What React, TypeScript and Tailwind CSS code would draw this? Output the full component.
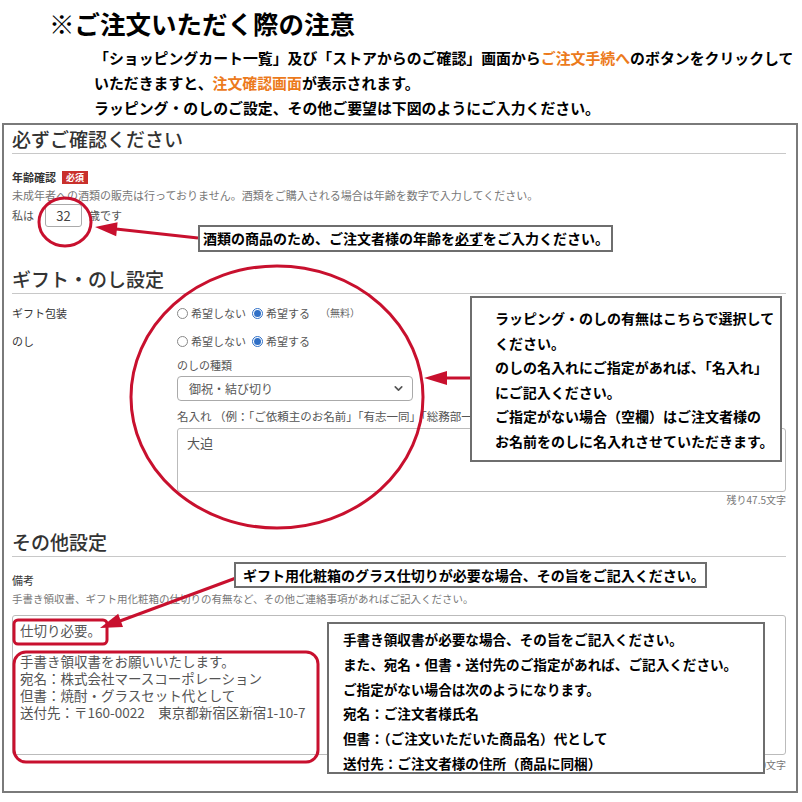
import React from 'react';
import { ChevronDown } from 'lucide-react';

const jp = { fontFamily: '"Noto Sans CJK JP", "Noto Sans", sans-serif' };

function Radio({ checked, label }: { checked?: boolean; label: string }) {
  return (
    <span className="inline-flex items-center gap-[3px] mr-[6px]">
      <span
        className={
          checked
            ? 'w-[11px] h-[11px] rounded-full border border-[#2f6fc6] flex items-center justify-center'
            : 'w-[11px] h-[11px] rounded-full border border-[#888]'
        }
      >
        {checked && <span className="w-[7px] h-[7px] rounded-full bg-[#2f6fc6]" />}
      </span>
      <span>{label}</span>
    </span>
  );
}

function SectionTitle({ children, className }: { children: React.ReactNode; className?: string }) {
  return (
    <h2
      className={
        'h-[29px] leading-[28px] text-[19px] font-medium text-[#333] border-b border-[#c8c8c8] mr-[6px] ' +
        (className ?? '')
      }
    >
      {children}
    </h2>
  );
}

function Callout({ className, children }: { className: string; children: React.ReactNode }) {
  return (
    <div className={'absolute bg-white border-2 border-[#6e6e6e] font-bold text-black ' + className}>
      {children}
    </div>
  );
}

export default function App() {
  return (
    <div className="relative w-[802px] h-[802px] bg-white overflow-hidden" style={jp}>
      {/* heading notes */}
      <div className="pt-[7px]">
        <h1 className="pl-[49px] text-[25.5px] leading-[32px] font-bold text-black">※ご注文いただく際の注意</h1>
        <div className="pl-[94px] mt-[6px] text-[14.9px] leading-[25px] font-bold text-black whitespace-nowrap">
          <p>
            「ショッピングカート一覧」及び「ストアからのご確認」画面から
            <span className="text-[#ec7a1c]">ご注文手続へ</span>のボタンをクリックして
          </p>
          <p>
            いただきますと、<span className="text-[#ec7a1c]">注文確認画面</span>が表示されます。
          </p>
          <p>ラッピング・のしのご設定、その他ご要望は下図のようにご入力ください。</p>
        </div>
      </div>

      {/* order form */}
      <div className="ml-[2px] mt-[3px] w-[796px] h-[670px] border-2 border-[#7a7a7a] pl-[8px] pr-[4px] text-[#555]">
        <SectionTitle>必ずご確認ください</SectionTitle>

        <div className="mt-[16px] flex items-center gap-[6px] h-[14px]">
          <span className="text-[11px] font-bold text-[#333]">年齢確認</span>
          <span className="bg-[#c9302c] text-white text-[9px] font-bold leading-[13px] px-[4px]">必須</span>
        </div>
        <p className="mt-[3px] text-[11px] leading-[16px] text-[#777]">
          未成年者への酒類の販売は行っておりません。酒類をご購入される場合は年齢を数字で入力してください。
        </p>
        <div className="mt-[1px] flex items-center h-[23px] text-[11px]">
          <span>私は</span>
          <span className="ml-[11px] w-[37px] h-[23px] border border-[#aaa] rounded-[3px] flex items-center justify-center text-[13px] text-[#444]">
            32
          </span>
          <span className="ml-[7px]">歳です</span>
        </div>

        <SectionTitle className="mt-[38px]">ギフト・のし設定</SectionTitle>

        <div className="flex text-[11px] leading-[16px]">
          <div className="w-[165px] shrink-0">
            <p className="mt-[11px] text-[#333]">ギフト包装</p>
            <p className="mt-[12px] text-[#333]">のし</p>
          </div>
          <div className="flex-1 pr-[6px]">
            <div className="mt-[11px] flex items-center">
              <Radio label="希望しない" />
              <Radio checked label="希望する" />
              <span className="ml-[4px] text-[10px] text-[#666]">（無料）</span>
            </div>
            <div className="mt-[12px] flex items-center">
              <Radio label="希望しない" />
              <Radio checked label="希望する" />
            </div>
            <p className="mt-[8px]">のしの種類</p>
            <div className="mt-[3px] w-[236px] h-[25px] border border-[#aaa] rounded-[4px] flex items-center justify-between pl-[11px] pr-[7px] text-[12px] text-[#555]">
              <span>御祝・結び切り</span>
              <ChevronDown size={13} strokeWidth={3} className="text-[#555]" />
            </div>
            <p className="mt-[7px] whitespace-nowrap text-[11.5px]">
              名入れ （例：「ご依頼主のお名前」「有志一同」「総務部一同」など）
            </p>
            <div className="mt-[4px] h-[64px] border border-[#bbb] rounded-[3px] px-[9px] py-[5px] text-[13px] leading-[18px] text-[#555]">
              大迫
            </div>
            <p className="mt-[1px] text-right text-[10px] leading-[14px] text-[#777]">残り47.5文字</p>
          </div>
        </div>

        <SectionTitle className="mt-[21px]">その他設定</SectionTitle>

        <p className="mt-[15px] text-[11px] leading-[16px] text-[#333]">備考</p>
        <p className="mt-[3px] text-[10.5px] leading-[16px] text-[#777]">
          手書き領収書、ギフト用化粧箱の仕切りの有無など、その他ご連絡事項があればご記入ください。
        </p>
        <div className="mt-[8px] mr-[6px] h-[140px] border border-[#bbb] rounded-[3px] px-[7px] pt-[6px] text-[13.5px] leading-[17px] text-[#555]">
          <p>仕切り必要。</p>
          <div className="mt-[14px]">
            <p>手書き領収書をお願いいたします。</p>
            <p>宛名：株式会社マースコーポレーション</p>
            <p>但書：焼酎・グラスセット代として</p>
            <p className="whitespace-pre">送付先：〒160-0022　東京都新宿区新宿1-10-7</p>
          </div>
        </div>
        <p className="mt-[3px] mr-[6px] text-right text-[10px] leading-[14px] text-[#777]">残り200文字</p>
      </div>

      {/* red markings */}
      <svg className="absolute inset-0 pointer-events-none" width={802} height={802} viewBox="0 0 802 802">
        <g fill="none" stroke="#c8102e" strokeWidth={3}>
          <ellipse cx={65} cy={222} rx={26} ry={24} />
          <ellipse cx={277} cy={397} rx={146} ry={131} />
          <rect x={14} y={620} width={93} height={24} rx={4} />
          <rect x={14} y={652} width={304} height={110} rx={12} />
          <line x1={198} y1={238} x2={116} y2={229} />
          <line x1={470} y1={378} x2={446} y2={378} />
          <line x1={236} y1={578} x2={120} y2={621} />
        </g>
        <g fill="#c8102e">
          <polygon points="95,227 117.6,222.3 116.2,236.3" />
          <polygon points="424,378 447,371 447,385" />
          <polygon points="100,628 123,627 118.2,613.8" />
        </g>
      </svg>

      <Callout className="left-[198px] top-[225px] w-[415px] h-[27px] pl-[3px] text-[14px] leading-[23px]">
        酒類の商品のため、ご注文者様の年齢を<span className="underline">必ず</span>をご入力ください。
      </Callout>

      <Callout className="left-[470px] top-[296px] w-[312px] h-[166px] pl-[23px] pt-[8px] text-[14px] leading-[24.6px]">
        <p>ラッピング・のしの有無はこちらで選択して</p>
        <p>ください。</p>
        <p>のしの名入れにご指定があれば、「名入れ」</p>
        <p>にご記入ください。</p>
        <p>ご指定がない場合（空欄）はご注文者様の</p>
        <p>お名前をのしに名入れさせていただきます。</p>
      </Callout>

      <Callout className="left-[234px] top-[562px] w-[473px] h-[26px] pl-[7px] text-[14px] leading-[22px]">
        ギフト用化粧箱のグラス仕切りが必要な場合、その旨をご記入ください。
      </Callout>

      <Callout className="left-[327px] top-[622px] w-[438px] h-[152px] pl-[14px] pt-[3px] text-[13.6px] leading-[24.8px]">
        <p>手書き領収書が必要な場合、その旨をご記入ください。</p>
        <p>また、宛名・但書・送付先のご指定があれば、ご記入ください。</p>
        <p>ご指定がない場合は次のようになります。</p>
        <p>宛名：ご注文者様氏名</p>
        <p>但書：（ご注文いただいた商品名）代として</p>
        <p>送付先：ご注文者様の住所（商品に同梱）</p>
      </Callout>
    </div>
  );
}
